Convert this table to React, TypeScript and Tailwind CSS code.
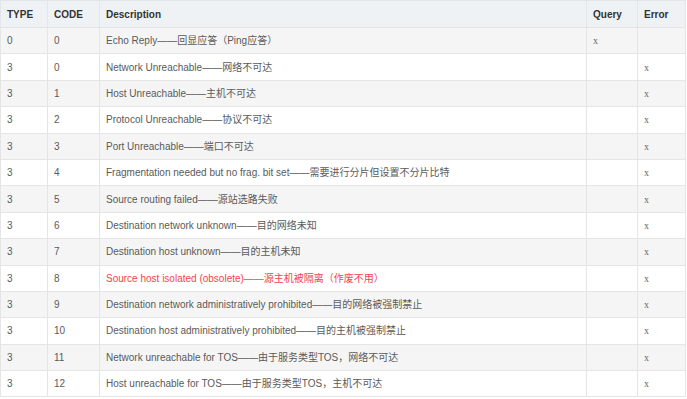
const rows: [string, string, string, boolean, boolean, boolean][] = [
  ["0", "0", "Echo Reply——回显应答（Ping应答）", true, false, false],
  ["3", "0", "Network Unreachable——网络不可达", false, true, false],
  ["3", "1", "Host Unreachable——主机不可达", false, true, false],
  ["3", "2", "Protocol Unreachable——协议不可达", false, true, false],
  ["3", "3", "Port Unreachable——端口不可达", false, true, false],
  ["3", "4", "Fragmentation needed but no frag. bit set——需要进行分片但设置不分片比特", false, true, false],
  ["3", "5", "Source routing failed——源站选路失败", false, true, false],
  ["3", "6", "Destination network unknown——目的网络未知", false, true, false],
  ["3", "7", "Destination host unknown——目的主机未知", false, true, false],
  ["3", "8", "Source host isolated (obsolete)——源主机被隔离（作废不用）", false, true, true],
  ["3", "9", "Destination network administratively prohibited——目的网络被强制禁止", false, true, false],
  ["3", "10", "Destination host administratively prohibited——目的主机被强制禁止", false, true, false],
  ["3", "11", "Network unreachable for TOS——由于服务类型TOS，网络不可达", false, true, false],
  ["3", "12", "Host unreachable for TOS——由于服务类型TOS，主机不可达", false, true, false],
];

export default function App() {
  return (
    <div className="h-[399px] w-[687px] bg-white font-['Liberation_Sans','Noto_Sans_CJK_SC',sans-serif] text-[10px]">
      <table className="w-[685px] table-fixed border-collapse text-left">
        <colgroup>
          <col className="w-[47px]" />
          <col className="w-[52px]" />
          <col className="w-[487px]" />
          <col className="w-[51px]" />
          <col className="w-[48px]" />
        </colgroup>
        <thead>
          <tr className="h-[27px] bg-[#eef2f5] text-[#333]">
            <th className="border border-[#e3e6e8] pl-[6px] font-bold">TYPE</th>
            <th className="border border-[#e3e6e8] pl-[6px] font-bold">CODE</th>
            <th className="border border-[#e3e6e8] pl-[6px] font-bold">Description</th>
            <th className="border border-[#e3e6e8] pl-[6px] font-bold">Query</th>
            <th className="border border-[#e3e6e8] pl-[6px] font-bold">Error</th>
          </tr>
        </thead>
        <tbody className="text-[#5a5a5a]">
          {rows.map(([type, code, desc, query, error, red], i) => (
            <tr
              key={i}
              className={i % 2 === 0 ? "h-[26.4px] bg-[#f5f5f5]" : "h-[26.4px] bg-white"}
            >
              <td className="border border-[#e5e5e5] pl-[6px]">{type}</td>
              <td className="border border-[#e5e5e5] pl-[6px]">{code}</td>
              <td
                className={
                  red
                    ? "border border-[#e5e5e5] pl-[6px] text-[#f4434f]"
                    : "border border-[#e5e5e5] pl-[6px]"
                }
              >
                {desc}
              </td>
              <td className="border border-[#e5e5e5] pl-[6px] font-['Liberation_Serif',serif] text-[#666]">
                {query ? "x" : ""}
              </td>
              <td className="border border-[#e5e5e5] pl-[6px] font-['Liberation_Serif',serif] text-[#666]">
                {error ? "x" : ""}
              </td>
            </tr>
          ))}
        </tbody>
      </table>
    </div>
  );
}
